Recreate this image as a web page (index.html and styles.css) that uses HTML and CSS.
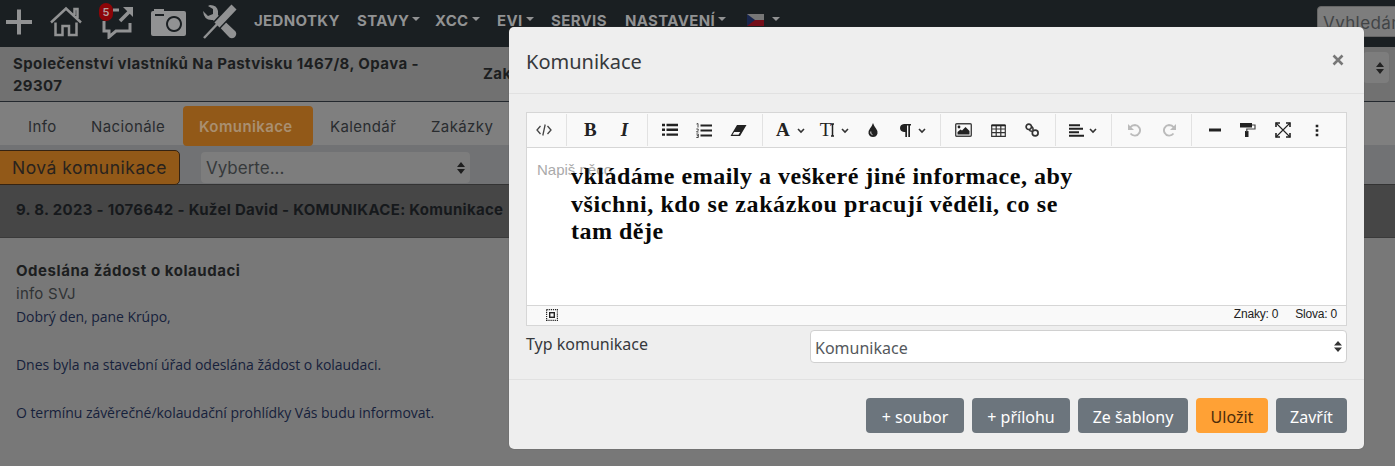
FILE: index.html
```html
<!DOCTYPE html>
<html lang="cs">
<head>
<meta charset="utf-8">
<title>Komunikace</title>
<link rel="stylesheet" href="styles.css">
</head>
<body>
<div class="page">
  <nav class="nav">
    <div class="nav-icons">
      <svg class="ic-plus" width="28" height="28" viewBox="0 0 28 28"><path d="M14 1.500v25M1 14h26" stroke="currentColor" stroke-width="4" fill="none"/></svg>
      <svg class="ic-home" width="34" height="32" viewBox="0 0 34 32"><path d="M2 16.500L17 2.500l15 14M25.500 9V3h3v9M6.500 16.500V29h7v-9h6.500v9h7.500V16.500" stroke="currentColor" stroke-width="2.500" fill="none"/></svg>
      <span class="chat">
        <svg width="34" height="34" viewBox="0 0 34 34"><path d="M12 5h6M3 16v10h5v6l7-6h14v-8" stroke="currentColor" stroke-width="3" fill="none"/><path d="M19 16L29 6" stroke="currentColor" stroke-width="3.500"/><path d="M22 2h10v10z" fill="currentColor"/></svg>
        <span class="badge">5</span>
      </span>
      <svg class="ic-camera" width="35" height="27" viewBox="0 0 35 27"><path fill="currentColor" fill-rule="evenodd" d="M2 2h1V0h10v2h20q2 0 2 2v21q0 2-2 2H2q-2 0-2-2V4q0-2 2-2zM4 5v2h9V5zM23 7a8 8 0 1 0 .01 0zM23 9a6 6 0 1 1-.01 0z"/></svg>
      <svg class="ic-tools" width="36" height="36" viewBox="0 0 36 36"><path fill="currentColor" d="M8 1q7 0 8 6v4l16 15q4 3 1 7-4 3-7-1L11 16q-9 1-10-9l5 5 5-2V5L6 2z"/><path d="M13 23L31 4" stroke="#1a1f22" stroke-width="10"/><path d="M2 34L20 15" stroke="currentColor" stroke-width="2.500"/><path d="M15 21L32 3" stroke="currentColor" stroke-width="7"/></svg>
    </div>
    <div class="menu">
      <span class="m1">JEDNOTKY</span><span class="m2">STAVY<i class="caret"></i></span><span class="m3">XCC<i class="caret"></i></span><span class="m4">EVI<i class="caret"></i></span><span class="m5">SERVIS</span><span class="m6">NASTAVENÍ<i class="caret"></i></span>
      <span class="m7"><svg width="17" height="12" viewBox="0 0 17 12"><path fill="#777" d="M0 0h17v6H0z"/><path fill="#740d18" d="M0 6h17v6H0z"/><path fill="#19264e" d="M0 0l8 6-8 6z"/></svg><i class="caret"></i></span>
    </div>
    <div class="search">Vyhledání</div>
  </nav>
  <header class="head">
    <div class="owner">Společenství vlastníků Na Pastvisku 1467/8, Opava -<br>29307</div>
    <div class="order">Zak</div>
    <div class="head-select"><svg width="8" height="12" viewBox="0 0 8 12"><path fill="currentColor" d="M0 5l4-5 4 5zM0 7l4 5 4-5z"/></svg></div>
  </header>
  <div class="tabs">
    <span class="t1">Info</span><span class="t2">Nacionále</span><span class="t3 active">Komunikace</span><span class="t4">Kalendář</span><span class="t5">Zakázky</span>
  </div>
  <div class="actions">
    <button class="new">Nová komunikace</button>
    <div class="filter"><span>Vyberte...</span><svg width="8" height="12" viewBox="0 0 8 12"><path fill="currentColor" d="M0 5l4-5 4 5zM0 7l4 5 4-5z"/></svg></div>
  </div>
  <div class="entry-head"><span>9. 8. 2023 - 1076642 - Kužel David - KOMUNIKACE: Komunikace</span></div>
  <main class="entry">
    <div class="subject"><span>Odeslána žádost o kolaudaci</span></div>
    <div class="tag"><span>info SVJ</span></div>
    <p class="p1">Dobrý den, pane Krúpo,</p>
    <p class="p2">Dnes byla na stavební úřad odeslána žádost o kolaudaci.</p>
    <p class="p3">O termínu závěrečné/kolaudační prohlídky Vás budu informovat.</p>
  </main>
</div>

<section class="modal">
  <div class="modal-head"><span class="title">Komunikace</span><svg width="12" height="12" viewBox="0 0 12 12"><path d="M1.500 1.500l9 9M10.500 1.500l-9 9" stroke="#777" stroke-width="2.600"/></svg></div>
  <div class="modal-body">
    <div class="editor">
      <div class="bar">
        <div class="grp g1"><svg width="16" height="14" viewBox="0 0 16 14"><path d="M4.500 3L1 7l3.500 4M11.500 3L15 7l-3.500 4M9.200 1.500L6.800 12.500" stroke="#444" stroke-width="1.300" fill="none"/></svg></div>
        <div class="grp g2"><b class="gl">B</b><i class="gl">I</i></div>
        <div class="grp g3">
          <svg width="16" height="14" viewBox="0 0 16 14"><path d="M0 2h3M0 6.800h3M0 11.600h3M4.500 2H16M4.500 6.800H16M4.500 11.600H16" stroke="#222" stroke-width="2.400"/></svg>
          <svg width="16" height="15" viewBox="0 0 16 15"><path d="M4.500 2.500H16M4.500 7.500H16M4.500 12.500H16" stroke="#222" stroke-width="2"/><path d="M.5 1L2 .5v4M.3 6h1.900v1.300L.5 9h2M.3 11h2v3.500h-2M.8 12.700h1.500" stroke="#333" fill="none" stroke-width=".9"/></svg>
          <svg width="17" height="13" viewBox="0 0 17 13"><path fill="#222" fill-rule="evenodd" d="M7 1h9.500L10 12H.5zM4.200 8L2.500 10.700h6L10.200 8z"/></svg>
        </div>
        <div class="grp g4">
          <span class="dd"><b class="gl">A</b><svg width="8" height="6" viewBox="0 0 8 6"><path d="M1 1l3 3 3-3" stroke="#333" stroke-width="1.600" fill="none"/></svg></span>
          <span class="dd tt"><span class="gl">T</span><svg class="tbar" width="3" height="14" viewBox="0 0 3 14"><path d="M0 1h3M0 13h3M1.500 1v12" stroke="#222" stroke-width="1.500"/></svg><svg width="8" height="6" viewBox="0 0 8 6"><path d="M1 1l3 3 3-3" stroke="#333" stroke-width="1.600" fill="none"/></svg></span>
          <svg class="drop" width="10" height="14" viewBox="0 0 10 14"><path fill="#222" d="M5 0q1 3 3 5.500 2 2.500 1.500 5Q8.500 14 5 14T.5 10.500Q0 8 2 5.500 4 3 5 0z"/><path d="M2.800 8.500q-.8 2.500 1.700 3.200" stroke="#ddd" fill="none"/></svg>
          <span class="dd pp"><svg width="11" height="13" viewBox="0 0 11 13"><path fill="#222" d="M4 0h7v1.500h-1V13H8.300V1.500H7V13H5.300V8H4Q0 7.500 0 4t4-4z"/></svg><svg width="8" height="6" viewBox="0 0 8 6"><path d="M1 1l3 3 3-3" stroke="#333" stroke-width="1.600" fill="none"/></svg></span>
        </div>
        <div class="grp g5">
          <svg width="17" height="14" viewBox="0 0 17 14"><rect x=".7" y=".7" width="15.600" height="12.600" rx="1" fill="none" stroke="#444" stroke-width="1.400"/><circle cx="4" cy="4" r="1.400" fill="#222"/><path fill="#222" d="M2.500 11.500V9l3-2.500 1.500 1L10.500 4l4 4v3.500z"/></svg>
          <svg width="15" height="13" viewBox="0 0 15 13"><path d="M.7 1.500h13.600v10.800H.7zM.7 5h13.600M.7 8.700h13.600M5.200 1v11M9.800 1v11" stroke="#333" stroke-width="1.200" fill="none"/><path d="M.5 1.300h14" stroke="#222" stroke-width="2"/></svg>
          <svg width="14" height="14" viewBox="0 0 14 14"><circle cx="3.800" cy="3.800" r="2.700" fill="none" stroke="#333" stroke-width="1.700"/><circle cx="10.200" cy="10" r="2.900" fill="none" stroke="#333" stroke-width="1.700"/><path d="M6.200 3.500q2.500 1 1.700 3.700M4 6.500q.8 2 3.500 1.800" stroke="#333" stroke-width="1.400" fill="none"/></svg>
        </div>
        <div class="grp g6"><svg width="15" height="13" viewBox="0 0 15 13"><path d="M0 1.200h11M0 4.700h14M0 8.200h10M0 11.700h15" stroke="#222" stroke-width="2"/></svg><svg width="8" height="6" viewBox="0 0 8 6"><path d="M1 1l3 3 3-3" stroke="#333" stroke-width="1.600" fill="none"/></svg></div>
        <div class="grp g7">
          <svg width="13" height="13" viewBox="0 0 13 13"><path d="M2 3.500q2-2.500 5-2.500a5.300 5.300 0 1 1-4.500 8.500" stroke="#bbb" stroke-width="1.900" fill="none"/><path fill="#bbb" d="M0 0v6h6z"/></svg>
          <svg width="13" height="13" viewBox="0 0 13 13"><path d="M11 3.500Q9 1 6 1a5.300 5.300 0 1 0 4.500 8.500" stroke="#bbb" stroke-width="1.900" fill="none"/><path fill="#bbb" d="M13 0v6H7z"/></svg>
        </div>
        <div class="grp g8">
          <svg width="12" height="4" viewBox="0 0 12 4"><path fill="#222" d="M0 .5h12v3H0z"/></svg>
          <svg width="16" height="14" viewBox="0 0 16 14"><path fill="#222" d="M0 0h12v4.500H0zM5 8h3.500v6H5z"/><path d="M12 2h3v4H6.800v3" stroke="#444" stroke-width="1.200" fill="none"/></svg>
          <svg width="16" height="16" viewBox="0 0 16 16"><path d="M1 5V1h4M11 1h4v4M15 11v4h-4M5 15H1v-4" stroke="#222" stroke-width="1.600" fill="none"/><path d="M1 1l14 14M15 1L1 15" stroke="#222" stroke-width="1.100"/></svg>
          <svg width="4" height="13" viewBox="0 0 4 13"><path fill="#222" d="M.7.700h2.600v2.600H.7zM.7 5.200h2.600v2.600H.7zM.7 9.700h2.600v2.600H.7z"/></svg>
        </div>
      </div>
      <div class="canvas"><span class="hint">Napiš něco</span></div>
      <div class="status"><svg width="12" height="12" viewBox="0 0 12 12"><rect x=".6" y=".6" width="10.800" height="10.800" fill="none" stroke="#222" stroke-width="1.200" stroke-dasharray="1.200 .9"/><rect x="3.700" y="3.700" width="4.600" height="4.600" fill="none" stroke="#222" stroke-width="1.400"/></svg><span class="chars">Znaky: 0</span><span class="words">Slova: 0</span></div>
    </div>
    <div class="row"><label><span>Typ komunikace</span></label><div class="select"><span>Komunikace</span><svg width="8" height="11" viewBox="0 0 8 11"><path fill="#333" d="M0 4.500L4 0l4 4.500zM0 6.500L4 11l4-4.500z"/></svg></div></div>
  </div>
  <div class="modal-foot">
    <button class="b1">+ soubor</button><button class="b2">+ přílohu</button><button class="b3">Ze šablony</button><button class="b4 save">Uložit</button><button class="b5">Zavřít</button>
  </div>
  <div class="note"><span class="n1">vkládáme emaily a veškeré jiné informace, aby</span><br><span class="n2">všichni, kdo se zakázkou pracují věděli, co se</span><br><span class="n3">tam děje</span></div>
</section>
</body>
</html>
```
FILE: styles.css
```css
* { box-sizing: border-box; }
body { margin: 0; width: 1395px; height: 466px; overflow: hidden; position: relative; background: #787878; font-family: Inter, "Noto Sans", sans-serif; color: #1c1e20; white-space: nowrap; }
svg { display: block; flex: none; }
button { margin: 0; padding: 0; font-family: inherit; white-space: nowrap; }
.page { height: 466px; overflow: hidden; }

.nav { height: 47px; background: #1a1f22; color: #919293; display: flex; position: relative; }
.nav-icons { display: flex; width: 254px; padding-left: 5px; flex: none; align-items: flex-start; }
.ic-plus { margin-top: 8px; }
.ic-home { margin: 6px 0 0 16px; }
.chat { position: relative; margin: 5px 0 0 18px; }
.badge { position: absolute; left: -2px; top: -2px; width: 14px; height: 18px; border-radius: 7px; background: #8c0508; color: #b3a0a0; font-size: 11px; line-height: 18px; font-weight: 600; text-align: center; }
.ic-camera { margin: 9px 0 0 16px; }
.ic-tools { margin: 4px 0 0 16px; }
.menu { display: flex; height: 40px; align-items: center; font-size: 15px; font-weight: 700; letter-spacing: .35px; }
.menu > span { display: flex; align-items: center; flex: none; }
.m1 { width: 103px; } .m2 { width: 78px; } .m3 { width: 62px; } .m4 { width: 54px; } .m5 { width: 74px; } .m6 { width: 122px; }
.m7 svg { margin-right: 5px; }
.caret { border: 4px solid transparent; border-top-color: currentColor; border-bottom: 0; margin: -2px 0 0 3px; }
.search { position: absolute; left: 1317px; top: 6px; width: 90px; height: 31px; border: 1px solid #666; border-radius: 4px; background: #7d7d7d; color: #414446; font-size: 17px; line-height: 33px; letter-spacing: .4px; padding-left: 5px; }

.head { height: 55px; background: #717171; border-bottom: 1px solid #23282e; display: flex; font-weight: 700; font-size: 15px; line-height: 22px; letter-spacing: .4px; }
.owner { width: 483px; padding: 6px 0 0 13px; }
.order { width: 880px; padding-top: 16px; }
.head-select { width: 26px; height: 31px; margin-top: 5px; border-radius: 4px; background: #7d7d7d; padding: 10px 5px; display: flex; justify-content: flex-end; color: #222; }

.tabs { height: 43px; background: #7f7f7f; display: flex; font-size: 15px; color: #292c2f; letter-spacing: .4px; }
.tabs span { height: 40px; line-height: 41px; margin-top: 4px; }
.t1 { width: 91px; padding-left: 28px; } .t2 { width: 92px; }
.t3 { width: 130px; padding-left: 16px; } .t4 { width: 118px; padding-left: 17px; }
.active { background: #925918; color: #a98f70; border-radius: 4px; font-weight: 600; }

.actions { height: 40px; background: #717274; border-bottom: 1px solid #333; display: flex; }
.new { width: 185px; height: 35px; margin: 5px 0 0 -5px; padding-left: 16px; text-align: left; background: #925918; border: 1px solid #352312; border-radius: 5px; color: #29231e; font-size: 17.500px; letter-spacing: .5px; }
.filter { width: 269px; height: 31px; margin: 7px 0 0 21px; padding: 0 5px; background: #7d7d7d; border-radius: 4px; display: flex; justify-content: space-between; align-items: center; font-size: 17px; color: #36393b; }
.filter svg { color: #1e1e1e; }

.entry-head { height: 53px; background: #464646; border-bottom: 1px solid #3a3a3a; padding-left: 16px; line-height: 49px; font-size: 15px; font-weight: 700; letter-spacing: .3px; color: #16191c; }
.entry { padding: 21px 0 0 16px; font-size: 15px; line-height: 23px; }
.subject { font-weight: 700; letter-spacing: .55px; }
.tag { color: #303335; letter-spacing: .25px; }
.entry p { margin: 0; height: 48px; line-height: 24px; font-family: "Open Sans", "Noto Sans", sans-serif; font-size: 14px; letter-spacing: -.05px; color: #16213b; }

.modal { position: absolute; z-index: 2; left: 509px; top: 27px; width: 855px; height: 422px; background: #eee; border-radius: 5px; font-family: "Noto Sans", "Open Sans", sans-serif; color: #36393c; box-shadow: 0 0 1px #444; }
.modal-head { height: 67px; border-bottom: 1px solid #e1e1e1; display: flex; justify-content: space-between; padding: 0 20px 0 17px; font-size: 20px; line-height: 70px; }
.modal-head svg { margin-top: 27px; }
.modal-body { height: 286px; border-bottom: 1px solid #e1e1e1; padding: 18px 17px 0; }
.editor { height: 214px; border: 1px solid #d6d6d6; background: #fff; display: flex; flex-direction: column; }
.bar { height: 35px; background: #f9f9f9; border-bottom: 1px solid #d6d6d6; display: flex; align-items: center; }
.grp { height: 32px; border-left: 1px solid #e2e2e2; display: flex; align-items: center; flex: none; }
.g1 { border: 0; width: 39px; padding-left: 9px; }
.g2 { width: 81px; padding-left: 17px; gap: 24px; }
.g3 { width: 115px; padding-left: 14px; gap: 18px; }
.g4 { width: 178px; padding-left: 13px; }
.g5 { width: 115px; padding-left: 14px; gap: 19px; }
.g6 { width: 56px; padding-left: 13px; gap: 5px; }
.g7 { width: 80px; padding-left: 16px; gap: 22px; }
.g8 { width: 150px; padding-left: 17px; gap: 19px; }
.g8 svg:last-child { margin-left: 5px; }
.gl { font-family: "Liberation Serif", serif; font-size: 19px; line-height: 20px; color: #222; }
.g2 i { font-weight: 700; }
.dd { display: flex; align-items: center; gap: 7px; }
.dd svg:last-child, .g6 svg:last-child { margin-top: 2px; }
.tt { margin-left: 15px; gap: 0; } .tt .tbar { margin-right: 7px; }
.drop { margin-left: 19px; } .pp { margin-left: 22px; gap: 7px; }
.canvas { height: 157px; padding: 11px 10px; font-family: "Liberation Sans", sans-serif; font-size: 15px; line-height: 22px; color: #aaa; }
.status { flex: 1; background: #f9f9f9; border-top: 1px solid #d6d6d6; display: flex; padding: 0 9px 0 19px; font-family: "Liberation Sans", sans-serif; font-size: 12px; line-height: 17px; letter-spacing: -.2px; color: #222; }
.status svg { margin-top: 3px; margin-right: auto; }
.words { margin-left: 17px; }
.row { display: flex; margin-top: 4px; font-size: 16px; }
.row label { width: 284px; line-height: 29px; }
.select { width: 537px; height: 33px; background: #fff; border: 1px solid #d0d0d0; border-radius: 4px; padding: 0 4px; display: flex; justify-content: space-between; align-items: center; color: #54585c; }
.select span { padding-top: 2px; }
.modal-foot { display: flex; justify-content: flex-end; padding: 18px 17px 0; gap: 8px; }
.modal-foot button { height: 35px; border: 0; border-radius: 4px; background: #6c757d; color: #fff; font-size: 16px; padding-top: 2px; }
.b1 { width: 98px; } .b2 { width: 98px; } .b3 { width: 110px; } .b4 { width: 72px; } .b5 { width: 71px; }
.modal-foot .save { background: #ffa135; color: #4d2c0b; }
.note { position: absolute; left: 62px; top: 136px; font-family: "Liberation Serif", serif; font-weight: 700; font-size: 24px; letter-spacing: .5px; line-height: 27.500px; color: #080808; }
.n2 { letter-spacing: .6px; }
```
